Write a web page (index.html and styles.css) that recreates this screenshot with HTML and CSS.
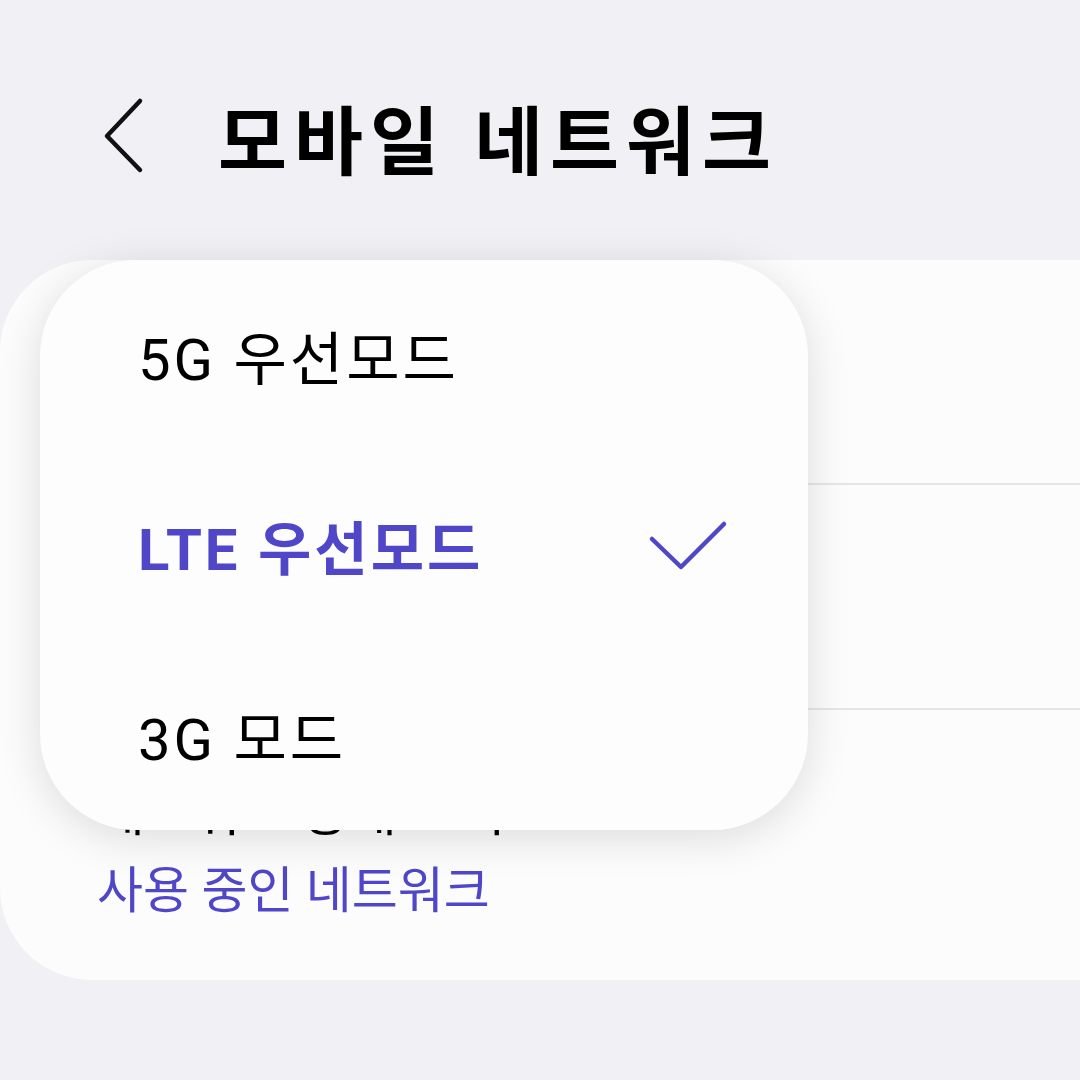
FILE: index.html
```html
<!DOCTYPE html>
<html lang="ko">
<head>
    <meta charset="UTF-8">
    <meta name="viewport" content="width=device-width, initial-scale=1.0">
    <title>모바일 네트워크</title>
    <link rel="stylesheet" href="styles.css">
</head>
<body>

    <header class="app-bar">
        <button class="back-button" type="button" aria-label="뒤로">
            <svg width="48" height="80" viewBox="0 0 48 80">
                <path d="M42 5 L9 40 L42 74" fill="none" stroke="#111" stroke-width="4.5" stroke-linecap="round" stroke-linejoin="round"/>
            </svg>
        </button>
        <h1 class="page-title">모바일 네트워크</h1>
    </header>

    <main class="content">
        <section class="settings-card">
            <div class="setting setting-first"></div>
            <div class="setting setting-second"></div>
            <div class="setting setting-last">
                <div class="setting-title">네트워크 상태 보기</div>
                <div class="setting-summary">사용 중인 네트워크</div>
            </div>
        </section>

        <!-- network mode dropdown, open over the list -->
        <div class="mode-menu">
            <div class="mode-option">5G 우선모드</div>
            <div class="mode-option selected">
                <span>LTE 우선모드</span>
                <svg class="check" width="80" height="52" viewBox="0 0 80 52">
                    <path d="M4 20 L33 48 L76 5" fill="none" stroke="#5046c8" stroke-width="4.5" stroke-linecap="round" stroke-linejoin="round"/>
                </svg>
            </div>
            <div class="mode-option">3G 모드</div>
        </div>
    </main>

</body>
</html>
```

FILE: styles.css
```css
body {
    margin: 0;
    width: 1080px;
    height: 1080px;
    overflow: hidden;
    background-color: #f1f1f5;
    font-family: Roboto, "Noto Sans CJK KR", sans-serif;
    color: #000;
}

.app-bar {
    height: 248px;
    padding-top: 12px;
    padding-left: 98px;
    display: flex;
    align-items: center;
    gap: 72px;
}

.back-button {
    padding: 0;
    border: none;
    background: none;
    display: flex;
}

.page-title {
    margin: 0;
    font-family: "Noto Sans CJK KR", sans-serif;
    font-size: 75px;
    font-weight: 700;
    letter-spacing: 7px;
    line-height: 1;
}

.content {
    position: relative;
}

.settings-card {
    height: 720px;
    background-color: #fcfcfd;
    border-radius: 92px 0 0 92px;
    display: flex;
    flex-direction: column;
}

.setting {
    margin-left: 97px;
    box-sizing: border-box;
}

.setting-first,
.setting-second {
    height: 225px;
    border-bottom: 2px solid #e6e6e9;
}

.setting-last {
    padding-top: 72px;
}

.setting-title {
    font-size: 52px;
    line-height: 64px;
}

.setting-summary {
    margin-top: 15px;
    font-size: 50px;
    line-height: 60px;
    color: #5046c8;
}

.mode-menu {
    position: absolute;
    top: 0;
    left: 40px;
    width: 768px;
    height: 570px;
    background-color: #fdfdfd;
    border-radius: 96px;
    box-shadow: 0 8px 44px rgba(0, 0, 0, 0.13);
    display: flex;
    flex-direction: column;
}

.mode-option {
    height: 190px;
    padding: 0 80px 0 98px;
    display: flex;
    align-items: center;
    justify-content: space-between;
    font-size: 58px;
    letter-spacing: 3px;
}

.mode-option.selected {
    color: #5046c8;
    font-weight: 700;
}
```
